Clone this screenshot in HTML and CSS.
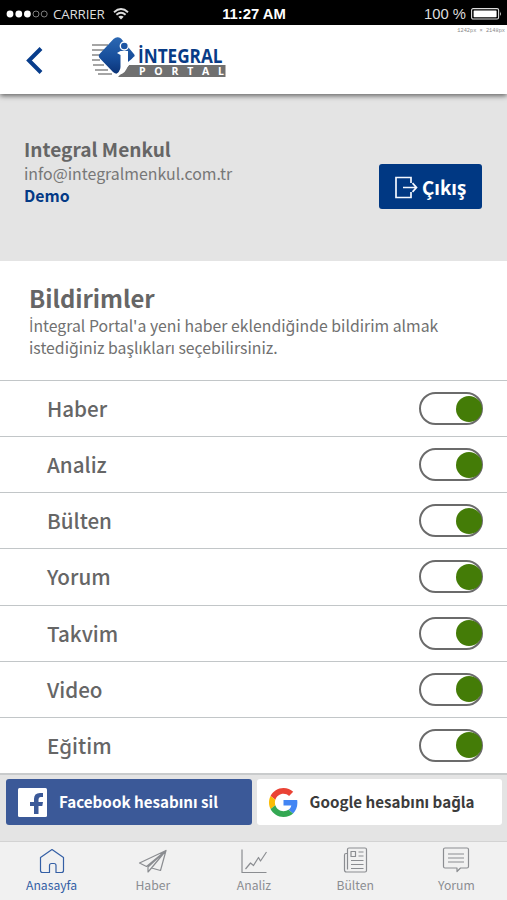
FILE: index.html
```html
<!DOCTYPE html>
<html lang="tr">
<head>
<meta charset="utf-8">
<title>İntegral Portal</title>
<link rel="stylesheet" href="styles.css">
</head>
<body>
<div class="status">
  <div class="carrier">
    <svg width="43" height="10" viewBox="0 0 43 10"><g fill="#fff"><circle cx="4" cy="5" r="3.4"/><circle cx="12.8" cy="5" r="3.4"/><circle cx="21.4" cy="5" r="3.4"/></g><g fill="none" stroke="#8c8c8c" stroke-width=".9"><circle cx="30" cy="5" r="3"/><circle cx="38.2" cy="5" r="3"/></g></svg>
    <span class="carrier-name">CARRIER</span>
    <svg class="wifi" width="16" height="12" viewBox="0 0 16 12"><g fill="none" stroke="#ddd" stroke-width="1.9"><path d="M1 4.2Q8-2 15 4.2M3.4 6.8Q8 2.8 12.6 6.8"/></g><path d="M5.3 8.7Q8 6.6 10.7 8.7L8 11.5Z" fill="#ddd"/></svg>
  </div>
  <span class="clock">11:27 AM</span>
  <div class="power"><span>100 %</span>
    <svg width="31" height="12" viewBox="0 0 31 12"><rect x=".6" y=".6" width="27" height="10.4" rx="1.5" fill="none" stroke="#ddd" stroke-width="1.1"/><rect x="2.6" y="2.4" width="23" height="6.8" rx=".6" fill="#fff"/><path d="M29 3.500q1.800 2.300 0 4.600z" fill="#ddd"/></svg>
  </div>
</div>
<header class="top">
  <svg class="back" width="17" height="27" viewBox="0 0 17 27"><path d="M15 1.500L3 13.500L15 25.500" fill="none" stroke="#083d8c" stroke-width="4"/></svg>
  <svg class="logo" width="136" height="42" viewBox="0 0 136 42">
    <defs><linearGradient id="blue" x1="0" y1="0" x2="0" y2="1"><stop offset="0" stop-color="#2c68b3"/><stop offset=".6" stop-color="#164c99"/><stop offset="1" stop-color="#0b3377"/></linearGradient></defs>
    <path d="M1 8h16M1 13h12M1 18h8M1 23h8M2 28h11M4 33h13M7 37h14" stroke="#888" stroke-width="1.5"/>
    <path d="M27 40L38 28H134.500V40Z" fill="#707070"/>
    <path d="M22.500 2Q26-1 30 1.500L42.500 16.500Q45 19 42.500 22L29 35.500Q25.500 38 22 35L9 21.500Q6.500 19 9 16.500Z" fill="url(#blue)"/>
    <path d="M29.500 14H37V25Q41 22 43.500 19L44.500 21Q37 28 35.500 32Q33 38 23 38.500Q29.500 35 29.500 30V18L26 16Z" fill="#fff"/>
    <circle cx="33.300" cy="9" r="4" fill="#1c55a4" stroke="#fff" stroke-width="1.400"/>
    <text class="logo-name" x="47" y="26" textLength="84.500" lengthAdjust="spacingAndGlyphs">İNTEGRAL</text>
    <text class="logo-sub" x="48" y="38" textLength="85">PORTAL</text>
  </svg>
  <span class="size">1242px × 2148px</span>
</header>
<section class="profile">
  <div class="who">
    <div class="name">Integral Menkul</div>
    <div class="mail">info@integralmenkul.com.tr</div>
    <div class="plan">Demo</div>
  </div>
  <button class="exit">
    <svg width="23" height="23" viewBox="0 0 23 23" fill="none" stroke="#f4f8ff" stroke-width="1.700"><path d="M16 7V1.500H1V21.500H16V16M8 11.500H21M17.500 7.200L21.500 11.500L17.500 15.800"/></svg>
    <span>Çıkış</span>
  </button>
</section>
<section class="intro">
  <h1>Bildirimler</h1>
  <p><span class="dotted">İ</span>ntegral Portal'a yeni haber eklendiğinde bildirim almak<br>istediğiniz başlıkları seçebilirsiniz.</p>
</section>
<div class="list">
  <div class="row"><span>Haber</span><i class="toggle"></i></div>
  <div class="row"><span>Analiz</span><i class="toggle"></i></div>
  <div class="row"><span>Bülten</span><i class="toggle"></i></div>
  <div class="row"><span>Yorum</span><i class="toggle"></i></div>
  <div class="row"><span>Takvim</span><i class="toggle"></i></div>
  <div class="row"><span>Video</span><i class="toggle"></i></div>
  <div class="row"><span>Eğitim</span><i class="toggle"></i></div>
</div>
<div class="accounts">
  <button class="account facebook">
    <svg width="29" height="29" viewBox="0 0 29 29"><rect width="29" height="29" rx="1.500" fill="#fff"/><path d="M16 26V18H12V14H16V11Q16 5 22 5H25V9H22.500Q20.500 9 20.500 11.500V14H25L24.300 18H20.500V26Z" fill="#3b5998"/></svg>
    <span>Facebook hesabını sil</span>
  </button>
  <button class="account google">
    <svg width="29" height="29" viewBox="0 0 48 48"><path fill="#ea4335" d="M24 9.500c3.540 0 6.710 1.220 9.210 3.600l6.850-6.850C35.900 2.380 30.470 0 24 0 14.620 0 6.510 5.380 2.560 13.220l7.980 6.190C12.430 13.720 17.740 9.500 24 9.500z"/><path fill="#4285f4" d="M46.980 24.550c0-1.570-.15-3.090-.38-4.550H24v9.020h12.940c-.58 2.960-2.260 5.480-4.780 7.180l7.730 6c4.510-4.180 7.090-10.360 7.090-17.650z"/><path fill="#fbbc05" d="M10.530 28.590c-.48-1.450-.76-2.990-.76-4.590s.27-3.140.76-4.590l-7.980-6.190C.92 16.460 0 20.120 0 24s.92 7.540 2.560 10.780l7.970-6.190z"/><path fill="#34a853" d="M24 48c6.480 0 11.930-2.130 15.890-5.810l-7.730-6c-2.150 1.450-4.920 2.300-8.160 2.300-6.260 0-11.570-4.220-13.470-9.910l-7.980 6.190C6.510 42.620 14.620 48 24 48z"/></svg>
    <span>Google hesabını bağla</span>
  </button>
</div>
<nav class="tabs">
  <a class="tab active"><svg width="28" height="28" viewBox="0 0 28 28"><path d="M2.500 10.500L14 2.500L25.500 10.500V23.500Q25.500 25.500 23.500 25.500H18V18.500Q18 16.500 16 16.500H13.500Q11.500 16.500 11.500 18.500V25.500H4.500Q2.500 25.500 2.500 23.500Z"/></svg><span>Anasayfa</span></a>
  <a class="tab"><svg width="28" height="28" viewBox="0 0 28 28"><path d="M27 3.500L.5 16L7.500 19.500L27 3.500L21.500 23.500L12.500 21L27 3.500L9 20V25L12.500 21"/></svg><span>Haber</span></a>
  <a class="tab"><svg width="28" height="28" viewBox="0 0 28 28"><path d="M2 2.500V25.500H26.500M5.500 22L10.500 16L13.500 18.500L18.500 10.500L20.500 14L26.500 5"/></svg><span>Analiz</span></a>
  <a class="tab"><svg width="28" height="28" viewBox="0 0 28 28"><path d="M6.500 22.500V2.500Q6.500 1 8 1H24Q25.500 1 25.500 2.500V23.500Q25.500 25 24 25H5.500Q3.500 25 3.500 23V8Q3.500 6.500 5 6.500H6.500M10 4.500H14.500V9.500H10ZM17.500 5H22.500M17.500 9H22.500M10 13.500H22.500M10 17.500H22.500M10 21.500H22.500"/></svg><span>Bülten</span></a>
  <a class="tab"><svg width="28" height="28" viewBox="0 0 28 28"><path d="M3 1H25Q26.500 1 26.500 2.500V19.500Q26.500 21 25 21H18.500L15 24.500V21H3Q1.500 21 1.500 19.500V2.500Q1.500 1 3 1ZM6 7H22M6 11H22M6 15H22"/></svg><span>Yorum</span></a>
</nav>
</body>
</html>
```
FILE: styles.css
```css
* { box-sizing: border-box; }
html, body { margin: 0; height: 900px; overflow: hidden; }
body {
  display: flex;
  flex-direction: column;
  background: #fff;
  color: #666;
  font-family: "Noto Sans CJK JP", "Noto Sans", sans-serif;
}
svg { display: block; flex: none; overflow: visible; }
button { border: 0; margin: 0; font: inherit; }
.status {
  flex: none;
  height: 25px;
  display: grid;
  grid-template-columns: 1fr auto 1fr;
  align-items: center;
  padding: 2px 5px 0 6px;
  background: #000;
  color: #ddd;
  font: 14.8px/20px "Liberation Sans", sans-serif;
}
.carrier { display: flex; align-items: center; }
.carrier-name { margin-left: 4px; font: 13.4px/20px "Open Sans", sans-serif; letter-spacing: -0.2px; }
.wifi { margin-left: 9px; }
.clock { color: #fff; font-weight: bold; }
.power { display: flex; justify-content: flex-end; align-items: center; gap: 5px; }
.top {
  flex: none;
  position: relative;
  z-index: 1;
  height: 69px;
  display: flex;
  align-items: flex-start;
  background: #fff;
  box-shadow: 0 2px 5px rgba(0, 0, 0, .55);
}
.back { margin: 22px 0 0 26px; }
.logo { margin: 12px 0 0 48px; }
.logo-name { font: bold 20px "Open Sans", sans-serif; fill: #083b86; }
.logo-sub { font: bold 10.5px "Open Sans", sans-serif; fill: #fff; }
.size { margin: 2px 2px 0 auto; color: #888; font: 5.3px/8px "Liberation Mono", monospace; }
.profile {
  flex: none;
  height: 167px;
  display: flex;
  justify-content: space-between;
  align-items: flex-start;
  padding: 43px 25px 0 24px;
  background: #e4e4e4;
}
.name { font-size: 19.1px; line-height: 25px; font-weight: bold; }
.mail { padding-top: 1px; font-size: 15.9px; line-height: 22px; color: #777; }
.plan { font-size: 15.8px; line-height: 22px; font-weight: bold; color: #043a86; }
.exit {
  width: 103px;
  height: 45px;
  margin-top: 27px;
  padding: 0 0 0 16px;
  display: flex;
  align-items: center;
  gap: 4px;
  border-radius: 3px;
  background: #003883;
  color: #fff;
  font-size: 18.8px;
  line-height: 26px;
  font-weight: bold;
}
.exit svg { margin-top: 1px; }
.intro { flex: none; height: 119px; padding: 21px 29px 0; }
h1 { margin: 0 0 1px; font-size: 23.8px; line-height: 32px; }
p { margin: 0; font-size: 15.8px; line-height: 22px; color: #707070; white-space: nowrap; }
.dotted { font-family: "Open Sans", sans-serif; }
.list { flex: none; height: 393px; display: flex; flex-direction: column; }
.row {
  flex: 1;
  display: flex;
  justify-content: space-between;
  align-items: center;
  padding: 0 24px 0 47px;
  border-top: 1px solid #c2c6c8;
  font-size: 20.6px;
  line-height: 30px;
  font-weight: 500;
}
.row span { margin-top: -1px; }
.toggle {
  width: 64px;
  height: 33px;
  display: flex;
  justify-content: flex-end;
  align-items: center;
  border: 2px solid #6b6b6b;
  border-radius: 17px;
}
.toggle::before { content: ""; width: 26px; height: 26px; margin-right: -1px; border-radius: 50%; background: #447c07; }
.accounts {
  flex: none;
  height: 68px;
  display: flex;
  align-items: flex-start;
  gap: 5px;
  padding: 4px 5px 0 6px;
  background: #e4e4e4;
  border-top: 2px solid #c9cbcc;
}
.account {
  flex: 1;
  height: 46px;
  display: flex;
  align-items: center;
  gap: 12px;
  padding: 0 0 0 12px;
  border-radius: 3px;
  font-size: 15.2px;
  line-height: 24px;
  font-weight: bold;
  white-space: nowrap;
}
.account span { margin-top: -2px; }
.facebook { background: #3b5998; color: #fff; }
.google { background: #fff; color: #3b3b3b; }
.tabs {
  flex: none;
  height: 59px;
  display: grid;
  grid-template-columns: repeat(5, 101.2px);
  padding: 5px 0 0 1px;
  background: #f1f1f1;
  border-top: 1px solid #d3d3d3;
}
.tab { display: flex; flex-direction: column; align-items: center; color: #8b8d91; font-size: 12.2px; line-height: 20px; }
.tab svg { fill: none; stroke: #8b8d91; stroke-width: 1.2; stroke-linejoin: round; }
.active { color: #345fa5; }
.active svg { stroke: #345fa5; }
```
